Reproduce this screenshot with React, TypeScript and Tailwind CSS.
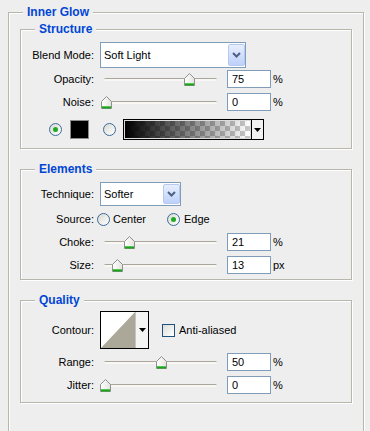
import React from "react";

const Label = ({ children }: { children: React.ReactNode }) => (
  <div className="w-[73px] shrink-0 text-right">{children}</div>
);

const Arrow = () => (
  <svg width="7" height="4" viewBox="0 0 7 4" className="block">
    <path d="M0 0h7L3.5 4z" fill="#000" />
  </svg>
);

function Group({
  title,
  className,
  children,
}: {
  title: string;
  className: string;
  children?: React.ReactNode;
}) {
  return (
    <div
      className={`flex flex-col border border-[#b8b6aa] shadow-[inset_1px_1px_0_#ffffff,1px_1px_0_#ffffff] ${className}`}
    >
      <div className="-mt-[9px] ml-[14px] h-[16px] w-fit shrink-0 bg-[#eeeeee] px-[4px] text-[12px] font-bold leading-[16px] text-[#0046d5]">
        {title}
      </div>
      {children}
    </div>
  );
}

function Select({ value, className }: { value: string; className: string }) {
  return (
    <div
      className={`ml-[6px] flex shrink-0 items-center border border-[#7f9db9] bg-white py-[1px] ${className}`}
    >
      <span className="flex-1 pl-[3px]">{value}</span>
      <div className="flex h-full w-[17px] items-center justify-center rounded-[2px] border border-[#b5c9f3] bg-[linear-gradient(#e8effd,#bed1fa)]">
        <svg width="9" height="6" viewBox="0 0 9 6" className="block">
          <path d="M1 1L4.5 4.5L8 1" stroke="#4d6185" strokeWidth="2" fill="none" />
        </svg>
      </div>
    </div>
  );
}

function Thumb({ left }: { left: number }) {
  return (
    <svg
      width="11"
      height="13"
      viewBox="0 0 11 13"
      className="absolute top-[3px] block"
      style={{ left }}
    >
      <defs>
        <linearGradient id="tg" x1="0" y1="0" x2="1" y2="0">
          <stop offset="0" stopColor="#ffffff" />
          <stop offset="1" stopColor="#e4e3dc" />
        </linearGradient>
      </defs>
      <path d="M0.5 5.5L5.5 0.5L10.5 5.5V12.5H0.5Z" fill="url(#tg)" stroke="#8e8f8f" />
      <rect x="1" y="10" width="9" height="1" fill="#4fc94f" />
      <rect x="1" y="11" width="9" height="1.5" fill="#21a121" />
    </svg>
  );
}

function Radio({ checked }: { checked?: boolean }) {
  return (
    <div className="flex h-[13px] w-[13px] shrink-0 items-center justify-center rounded-full border border-[#3a6b9c] bg-[linear-gradient(135deg,#d9d9d2,#ffffff)]">
      {checked && <div className="h-[5px] w-[5px] rounded-full bg-[#22a822]" />}
    </div>
  );
}

function SliderRow({
  label,
  left,
  value,
  unit,
  className,
}: {
  label: string;
  left: number;
  value: string;
  unit: string;
  className: string;
}) {
  return (
    <div className={`flex h-[18px] items-center ${className}`}>
      <Label>{label}</Label>
      <div className="relative ml-[6px] h-[18px] w-[122px] shrink-0">
        <div className="absolute left-[4px] right-[5px] top-[8px] h-[3px] rounded-full border-t border-[#a9a79d] bg-[#f8f7f4]" />
        <Thumb left={left} />
      </div>
      <div className="ml-[5px] flex h-[18px] w-[44px] shrink-0 items-center border border-[#7f9db9] bg-white pl-[4px]">
        {value}
      </div>
      <span className="ml-[2px]">{unit}</span>
    </div>
  );
}

export default function App() {
  return (
    <div className="h-[431px] w-[370px] overflow-hidden bg-[#eeeeee] pt-[12px] text-[11px] leading-[13px] text-black [font-family:'Liberation_Sans',Arial,sans-serif]">
      <div className="ml-[8px] flex h-[440px] w-[356px] flex-col border border-[#b8b6aa] shadow-[inset_1px_1px_0_#ffffff,1px_1px_0_#ffffff]">
        <div className="-mt-[9px] ml-[14px] h-[16px] w-fit shrink-0 bg-[#eeeeee] px-[4px] text-[12px] font-bold leading-[16px] text-[#0046d5]">
          Inner Glow
        </div>

        <div className="ml-[11px] mt-[9px] flex w-[332px] flex-col">
          <Group title="Structure" className="h-[120px]">
            <div className="mt-[5px] flex h-[26px] items-center">
              <Label>Blend Mode:</Label>
              <Select value="Soft Light" className="h-[26px] w-[146px]" />
            </div>
            <SliderRow label="Opacity:" left={84} value="75" unit="%" className="mt-[2px]" />
            <SliderRow label="Noise:" left={1} value="0" unit="%" className="mt-[5px]" />
            <div className="mt-[8px] flex h-[21px] items-center">
              <div className="ml-[28px]">
                <Radio checked />
              </div>
              <div className="ml-[8px] h-[19px] w-[19px] shrink-0 border border-[#8c8c8c] bg-black" />
              <div className="ml-[14px]">
                <Radio />
              </div>
              <div className="ml-[7px] flex h-[21px] w-[141px] shrink-0 border border-black">
                <div className="flex-1 border border-[#dcdcdc] bg-[image:linear-gradient(to_right,#000000,rgba(0,0,0,0)),repeating-conic-gradient(#c9c9c9_0_25%,#ffffff_0_50%)] bg-[length:100%_100%,10px_10px]" />
                <div className="flex w-[12px] items-center justify-center border-l border-black bg-[#f2f2f2]">
                  <Arrow />
                </div>
              </div>
            </div>
          </Group>

          <Group title="Elements" className="mt-[20px] h-[111px]">
            <div className="mt-[5px] flex h-[24px] items-center">
              <Label>Technique:</Label>
              <Select value="Softer" className="h-[24px] w-[81px]" />
            </div>
            <div className="mt-[7px] flex h-[13px] items-center">
              <Label>Source:</Label>
              <div className="ml-[3px] flex w-[70px] items-center">
                <Radio />
                <span className="ml-[3px]">Center</span>
              </div>
              <Radio checked />
              <span className="ml-[4px]">Edge</span>
            </div>
            <SliderRow label="Choke:" left={24} value="21" unit="%" className="mt-[7px]" />
            <SliderRow label="Size:" left={12} value="13" unit="px" className="mt-[5px]" />
          </Group>

          <Group title="Quality" className="mt-[20px] h-[103px]">
            <div className="mt-[3px] flex h-[38px] items-center">
              <Label>Contour:</Label>
              <div className="ml-[6px] flex h-[38px] w-[49px] shrink-0 border border-black bg-white">
                <svg width="34" height="36" viewBox="0 0 34 36" className="block">
                  <polygon points="0,36 34,0 34,36" fill="#aca899" />
                </svg>
                <div className="flex flex-1 items-center justify-center border-l border-[#c4c4c4] bg-[#f4f4f2]">
                  <Arrow />
                </div>
              </div>
              <div className="ml-[13px] h-[13px] w-[13px] shrink-0 border border-[#1c5180] bg-[linear-gradient(135deg,#dcdcd7,#ffffff)]" />
              <span className="ml-[4px]">Anti-aliased</span>
            </div>
            <SliderRow label="Range:" left={56} value="50" unit="%" className="mt-[4px]" />
            <SliderRow label="Jitter:" left={0} value="0" unit="%" className="mt-[5px]" />
          </Group>
        </div>
      </div>
    </div>
  );
}
